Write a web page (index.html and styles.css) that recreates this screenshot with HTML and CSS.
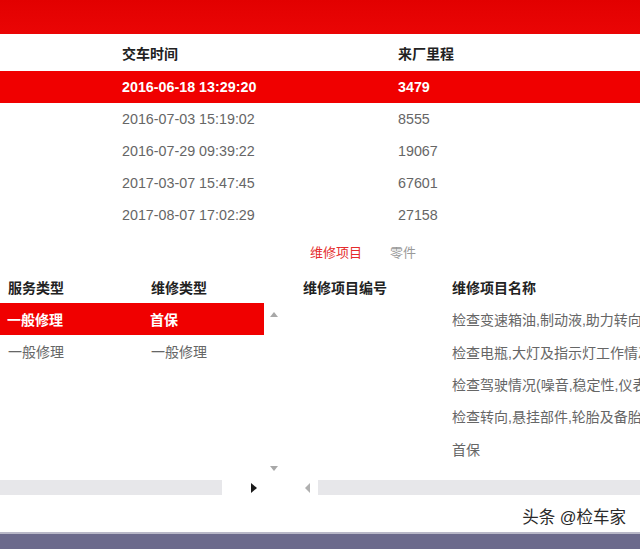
FILE: index.html
```html
<!DOCTYPE html>
<html lang="zh-CN">
<head>
<meta charset="utf-8">
<title>维修记录</title>
<link rel="stylesheet" href="styles.css">
</head>
<body>
<div class="page">
  <div class="topbar"></div>

  <div class="upper">
    <div class="urow uhead"><span>交车时间</span><span>来厂里程</span></div>
    <div class="urow sel"><span>2016-06-18 13:29:20</span><span>3479</span></div>
    <div class="urow"><span>2016-07-03 15:19:02</span><span>8555</span></div>
    <div class="urow"><span>2016-07-29 09:39:22</span><span>19067</span></div>
    <div class="urow"><span>2017-03-07 15:47:45</span><span>67601</span></div>
    <div class="urow"><span>2017-08-07 17:02:29</span><span>27158</span></div>
  </div>

  <div class="tabs"><span class="tab active">维修项目</span><span class="tab">零件</span></div>

  <div class="lower">
    <div class="lpanel">
      <div class="lrow lhead"><span class="c1">服务类型</span><span class="c2">维修类型</span></div>
      <div class="lbody">
        <div class="ltable">
          <div class="lrow sel"><span class="c1">一般修理</span><span class="c2">首保</span></div>
          <div class="lrow"><span class="c1">一般修理</span><span class="c2">一般修理</span></div>
        </div>
        <div class="vscroll">
          <span class="arr-up"></span>
          <span class="arr-down"></span>
        </div>
      </div>
      <div class="hscroll left">
        <div class="track"></div>
        <span class="arr-right"></span>
      </div>
    </div>

    <div class="rpanel">
      <div class="rrow rhead"><span class="r1">维修项目编号</span><span class="r2">维修项目名称</span></div>
      <div class="rbody">
        <div class="rrow"><span class="r1"></span><span class="r2">检查变速箱油,制动液,助力转向油</span></div>
        <div class="rrow"><span class="r1"></span><span class="r2">检查电瓶,大灯及指示灯工作情况</span></div>
        <div class="rrow"><span class="r1"></span><span class="r2">检查驾驶情况(噪音,稳定性,仪表</span></div>
        <div class="rrow"><span class="r1"></span><span class="r2">检查转向,悬挂部件,轮胎及备胎</span></div>
        <div class="rrow"><span class="r1"></span><span class="r2">首保</span></div>
      </div>
      <div class="hscroll right">
        <span class="arr-left"></span>
        <div class="track"></div>
      </div>
    </div>
  </div>

  <div class="spacer"></div>
  <div class="bottombar"></div>
  <div class="watermark">头条 @检车家</div>
</div>
</body>
</html>
```

FILE: styles.css
```css
html, body {
  margin: 0;
  padding: 0;
  background: #ffffff;
}
body {
  font-family: "Liberation Sans", "Noto Sans CJK SC", sans-serif;
  font-size: 14px;
  color: #666666;
}
.page {
  position: relative;
  width: 640px;
  height: 549px;
  overflow: hidden;
  display: flex;
  flex-direction: column;
}
.topbar {
  height: 34px;
  background: linear-gradient(#e20000, #ea0505);
  flex: none;
}
.upper {
  flex: none;
}
.urow {
  display: grid;
  grid-template-columns: 276px 1fr;
  padding-left: 122px;
  height: 32px;
  align-items: center;
  white-space: nowrap;
  font-size: 14.3px;
}
.urow.uhead {
  height: 37px;
  color: #222222;
  font-weight: 700;
  font-size: 14px;
}
.urow.sel, .lrow.sel {
  background: #f00000;
  color: #ffffff;
  font-weight: 700;
}
.tabs {
  height: 40px;
  display: flex;
  align-items: center;
  padding-left: 310px;
  gap: 28px;
  font-size: 13px;
  flex: none;
}
.tab { color: #999999; }
.tab.active { color: #e52b2b; }

.lower {
  display: flex;
  flex: none;
}
.lpanel {
  width: 300px;
  display: flex;
  flex-direction: column;
}
.lrow {
  display: grid;
  grid-template-columns: 143px 1fr;
  height: 32px;
  align-items: center;
  padding-left: 8px;
  white-space: nowrap;
}
.lrow.lhead {
  color: #222222;
  font-weight: 700;
  width: 256px;
}
.lbody {
  display: flex;
  height: 171px;
}
.ltable {
  width: 264px;
}
.ltable .lrow.sel {
  padding-left: 7px;
  padding-right: 0;
}
.vscroll {
  width: 20px;
  display: flex;
  flex-direction: column;
  justify-content: space-between;
  align-items: center;
  padding: 9px 0 3px;
}
.arr-up {
  width: 0; height: 0;
  border-left: 4px solid transparent;
  border-right: 4px solid transparent;
  border-bottom: 5px solid #a8a8a8;
}
.arr-down {
  width: 0; height: 0;
  border-left: 4px solid transparent;
  border-right: 4px solid transparent;
  border-top: 5px solid #a8a8a8;
}
.hscroll {
  height: 15px;
  margin-top: 6px;
  display: flex;
  align-items: center;
}
.hscroll .track {
  height: 15px;
  background: #e7e7ea;
}
.hscroll.left .track {
  width: 222px;
}
.arr-right {
  margin-left: 29px;
  width: 0; height: 0;
  border-top: 5px solid transparent;
  border-bottom: 5px solid transparent;
  border-left: 6px solid #1a1a1a;
}
.arr-left {
  margin-left: 5px;
  margin-right: 8px;
  width: 0; height: 0;
  border-top: 5px solid transparent;
  border-bottom: 5px solid transparent;
  border-right: 5px solid #b0b0b0;
}
.hscroll.right .track {
  flex: 1;
}
.rpanel {
  width: 340px;
  display: flex;
  flex-direction: column;
}
.rrow {
  display: grid;
  grid-template-columns: 149px 1fr;
  height: 32px;
  align-items: center;
  padding-left: 3px;
  white-space: nowrap;
  overflow: hidden;
}
.rrow.rhead {
  color: #222222;
  font-weight: 700;
}
.rbody {
  height: 171px;
}
.rbody .rrow {
  height: 32.4px;
}
.spacer {
  flex: 1;
}
.bottombar {
  height: 15px;
  flex: none;
  background: #6c6a8c;
  border-top: 2px solid #b9b8c8;
}
.watermark {
  position: absolute;
  right: 14px;
  bottom: 21px;
  font-size: 16.5px;
  color: #2a2a2a;
  text-shadow: 0 0 2px #ffffff, 0 0 2px #ffffff;
}
```
